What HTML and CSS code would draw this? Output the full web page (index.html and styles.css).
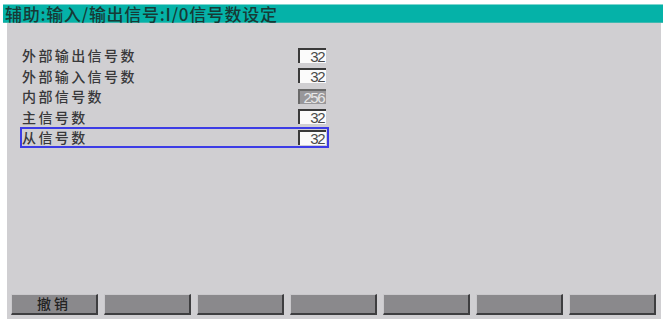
FILE: index.html
```html
<!DOCTYPE html>
<html lang="zh-CN">
<head>
<meta charset="utf-8">
<title>I/O信号数设定</title>
<link rel="stylesheet" href="styles.css">
</head>
<body>
<div class="screen">
  <div class="title">辅助:输入/输出信号:I/0信号数设定</div>
  <div class="panel">
    <div class="rows">
      <div class="row"><span class="label">外部输出信号数</span><span class="value">32</span></div>
      <div class="row"><span class="label">外部输入信号数</span><span class="value">32</span></div>
      <div class="row"><span class="label">内部信号数</span><span class="value value-dim">256</span></div>
      <div class="row"><span class="label">主信号数</span><span class="value">32</span></div>
      <div class="row row-selected"><span class="label">从信号数</span><span class="value">32</span></div>
    </div>
    <div class="keys">
      <div class="key">撤销</div>
      <div class="key"></div>
      <div class="key"></div>
      <div class="key"></div>
      <div class="key"></div>
      <div class="key"></div>
      <div class="key"></div>
    </div>
  </div>
</div>
</body>
</html>
```

FILE: styles.css
```css
html, body {
  margin: 0;
  padding: 0;
  background: #ffffff;
}

.screen {
  width: 663px;
  height: 319px;
  display: flex;
  flex-direction: column;
  font-family: "Noto Sans CJK SC", "Liberation Sans", sans-serif;
  overflow: hidden;
}

.title {
  margin: 4px 0 0 3px;
  height: 19px;
  line-height: 17px;
  padding-left: 2px;
  background: #05b2a8;
  border-top: 1px solid #7fd6cf;
  box-sizing: border-box;
  border-bottom: 1px solid #3fb9b0;
  color: #173a36;
  font-size: 17px;
  font-weight: 500;
  letter-spacing: 0.7px;
  white-space: nowrap;
}

.panel {
  flex: 1;
  margin: 0 2px 0 7px;
  background: #d0cfd2;
  display: flex;
  flex-direction: column;
  padding: 22px 0 4px 0;
}

.rows {
  display: flex;
  flex-direction: column;
  margin-left: 13px;
  width: 309px;
}

.row {
  height: 20.5px;
  box-sizing: border-box;
  border: 1px solid transparent;
  display: flex;
  align-items: center;
  justify-content: space-between;
  padding: 0 2px 0 1px;
}

.row-selected {
  border: 2px solid #3c3ce6;
  padding: 0 1px 0 0;
}

.label {
  font-size: 14px;
  line-height: 16px;
  color: #38383a;
  font-weight: 500;
  letter-spacing: 2.4px;
}

.value {
  width: 28px;
  height: 15px;
  box-sizing: border-box;
  background: #fbfbfb;
  border-left: 2px solid #3a3a3a;
  border-top: 2px solid #3a3a3a;
  font-family: "Liberation Sans", sans-serif;
  font-size: 15px;
  line-height: 13px;
  letter-spacing: -1.5px;
  text-align: right;
  color: #4a4a4a;
  padding-right: 2px;
}

.value-dim {
  background: #98979a;
  color: #e8e8e8;
  border-color: #6a6a6a;
}

.keys {
  margin-top: auto;
  margin-left: 4px;
  display: flex;
  gap: 6px;
}

.key {
  width: 87px;
  height: 21px;
  box-sizing: border-box;
  background: #8a898c;
  border-top: 1.5px solid #c9c8cb;
  border-left: 1.5px solid #c9c8cb;
  border-right: 2px solid #3e3e40;
  border-bottom: 2px solid #3e3e40;
  color: #222;
  font-size: 14px;
  font-weight: 500;
  line-height: 17px;
  text-align: center;
  letter-spacing: 3px;
}
```
